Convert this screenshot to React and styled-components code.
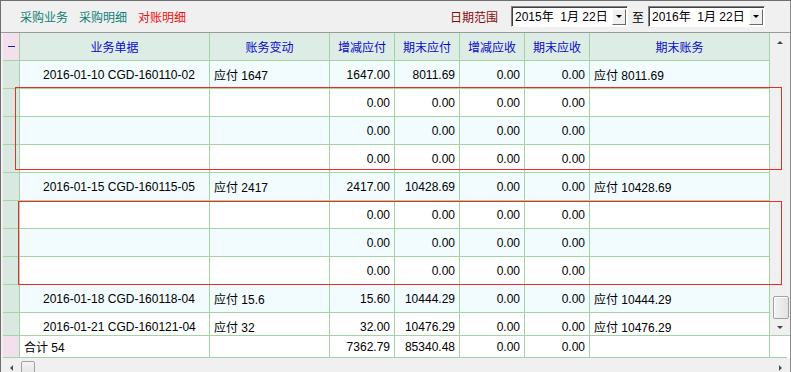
import React from "react";
import styled, { createGlobalStyle } from "styled-components";

const GlobalStyle = createGlobalStyle`
  html, body {
    margin: 0;
    padding: 0;
    background: #f0f0f0;
  }
  body {
    font-family: "Liberation Sans", "Noto Sans CJK SC", sans-serif;
    font-size: 12px;
  }
`;

const COLS = "17px 190px 120px 65px 65px 65px 65px 180px";
const LINE = "#a4d3a4";

const Frame = styled.div`
  position: relative;
  width: 791px;
  height: 372px;
  box-sizing: border-box;
  border-top: 1px solid #6f6f6f;
  border-left: 1px solid #6f6f6f;
  border-right: 1px solid #8a8a8a;
  background: #f0f0f0;
  overflow: hidden;
  display: flex;
  flex-direction: column;
`;

const Toolbar = styled.div`
  height: 31px;
  flex-shrink: 0;
  display: flex;
  align-items: center;
  padding-left: 19px;
  padding-right: 25px;
  border-bottom: 1px solid #9a9a9a;
  font-family: "Noto Sans CJK SC", "Liberation Sans", sans-serif;
`;

const NavLink = styled.span`
  color: ${(p) => (p.$active ? "#ee1111" : "#0f7f74")};
  margin-right: 11px;
  line-height: 14px;
`;

const Spacer = styled.div`
  flex: 1;
`;

const RangeLabel = styled.span`
  color: #8b0a0a;
  margin-right: 13px;
`;

const DateBox = styled.div`
  width: 117px;
  height: 21px;
  box-sizing: border-box;
  display: flex;
  align-items: center;
  background: #fff;
  border-top: 1px solid #828282;
  border-left: 1px solid #828282;
  border-bottom: 1px solid #fff;
  border-right: 1px solid #fff;
  box-shadow: inset 1px 1px 0 #404040;
  padding-left: 3px;
  font-family: "Liberation Sans", "Noto Sans CJK SC", sans-serif;
  color: #000;
  white-space: pre;
`;

const DateText = styled.span`
  flex: 1;
  line-height: 14px;
`;

const DropBtn = styled.div`
  width: 14px;
  height: 16px;
  margin-right: 1px;
  box-sizing: border-box;
  background: #f0f0f0;
  border-top: 1px solid #fff;
  border-left: 1px solid #fff;
  border-right: 1px solid #696969;
  border-bottom: 1px solid #696969;
  display: flex;
  align-items: center;
  justify-content: center;
`;

const Tri = styled.span`
  width: 0;
  height: 0;
  border-left: ${(p) => p.$s || 3}px solid transparent;
  border-right: ${(p) => p.$s || 3}px solid transparent;
  ${(p) =>
    p.$dir === "up"
      ? `border-bottom: ${p.$s || 3}px solid ${p.$c || "#000"};`
      : `border-top: ${p.$s || 3}px solid ${p.$c || "#000"};`}
`;

const SideTri = styled.span`
  width: 0;
  height: 0;
  border-top: 3px solid transparent;
  border-bottom: 3px solid transparent;
  ${(p) =>
    p.$dir === "left"
      ? "border-right: 3px solid #505050;"
      : "border-left: 3px solid #505050;"}
`;

const To = styled.span`
  margin: 0 4px;
  font-family: "Noto Sans CJK SC", sans-serif;
  color: #000;
`;

const Main = styled.div`
  display: flex;
  padding-left: 2px;
  height: 302px;
  flex-shrink: 0;
`;

const Viewport = styled.div`
  width: 767px;
  height: 302px;
  overflow: hidden;
  background: #fff;
`;

const Row = styled.div`
  display: grid;
  grid-template-columns: ${COLS};
  height: 28px;
  background: ${(p) => (p.$alt ? "#f2fbfd" : "#ffffff")};
`;

const HeadRow = styled(Row)`
  background: #ddede5;
`;

const Cell = styled.div`
  box-sizing: border-box;
  border-right: 1px solid ${LINE};
  border-bottom: 1px solid ${LINE};
  display: flex;
  align-items: center;
  justify-content: ${(p) =>
    p.$align === "right" ? "flex-end" : p.$align === "center" ? "center" : "flex-start"};
  padding: 0 ${(p) => (p.$align === "right" ? "4px" : "0")} 0
    ${(p) => (p.$pl != null ? p.$pl : 4)}px;
  white-space: nowrap;
  overflow: hidden;
  color: #000;
  font-family: "Liberation Sans", "Noto Sans CJK SC", sans-serif;
`;

const HeadCell = styled(Cell)`
  color: #0a0ad0;
  font-family: "Noto Sans CJK SC", "Liberation Sans", sans-serif;
  padding: 0;
  justify-content: center;
`;

const Marker = styled.div`
  box-sizing: border-box;
  border-right: 1px solid ${LINE};
  border-bottom: 1px solid ${LINE};
  background: ${(p) => (p.$pink ? "#f4e0ec" : "#d9e9e1")};
  display: flex;
  align-items: center;
  justify-content: center;
`;

const MinusBar = styled.span`
  width: 7px;
  height: 1px;
  background: #1a1ad8;
`;

const VScroll = styled.div`
  width: 19px;
  display: flex;
  flex-direction: column;
  align-items: center;
  background: #f0f0f0;
`;

const ArrowSlot = styled.div`
  height: ${(p) => p.$h}px;
  width: 100%;
  display: flex;
  align-items: center;
  justify-content: center;
`;

const Track = styled.div`
  flex: 1;
  width: 100%;
  display: flex;
  flex-direction: column;
  justify-content: flex-end;
  align-items: center;
`;

const Thumb = styled.div`
  width: 16px;
  height: 23px;
  box-sizing: border-box;
  margin-left: 2px;
  border: 1px solid #a2a2a2;
  border-radius: 2px;
  background: linear-gradient(90deg, #f4f4f4, #e2e2e2);
  box-shadow: inset 1px 1px 0 #fff;
`;

const FooterRow = styled.div`
  display: grid;
  grid-template-columns: ${COLS} 17px;
  height: 23px;
  margin-left: 2px;
  flex-shrink: 0;
  background: #fff;
  border-top: 1px solid ${LINE};
  box-sizing: border-box;
`;

const FooterFill = styled.div`
  border-bottom: 1px solid ${LINE};
  background: #fff;
`;

const HScroll = styled.div`
  flex: 1;
  display: flex;
  align-items: center;
  background: #f0f0f0;
`;

const HThumb = styled.div`
  width: 14px;
  height: 15px;
  box-sizing: border-box;
  margin-top: 3px;
  border: 1px solid #a2a2a2;
  border-radius: 2px;
  background: linear-gradient(180deg, #f4f4f4, #e2e2e2);
`;

const HArrow = styled.div`
  width: ${(p) => p.$w}px;
  display: flex;
  justify-content: center;
  margin-top: 2px;
`;

const Mark = styled.div`
  position: absolute;
  left: ${(p) => p.$x}px;
  top: ${(p) => p.$y}px;
  width: ${(p) => p.$w}px;
  height: ${(p) => p.$h}px;
  box-sizing: border-box;
  border: 1px solid rgb(240, 40, 40);
  pointer-events: none;
`;

const headers = ["业务单据", "账务变动", "增减应付", "期末应付", "增减应收", "期末应收", "期末账务"];

const main = (doc, change, add, end, endAcc) => ({
  doc,
  change,
  nums: [add, end, "0.00", "0.00"],
  acc: endAcc,
});
const sub = () => ({ doc: "", change: "", nums: ["0.00", "0.00", "0.00", "0.00"], acc: "" });

const rows = [
  main("2016-01-10 CGD-160110-02", "应付 1647", "1647.00", "8011.69", "应付 8011.69"),
  sub(),
  sub(),
  sub(),
  main("2016-01-15 CGD-160115-05", "应付 2417", "2417.00", "10428.69", "应付 10428.69"),
  sub(),
  sub(),
  sub(),
  main("2016-01-18 CGD-160118-04", "应付 15.6", "15.60", "10444.29", "应付 10444.29"),
  main("2016-01-21 CGD-160121-04", "应付 32", "32.00", "10476.29", "应付 10476.29"),
];

function DataRow({ r, alt }) {
  return (
    <Row $alt={alt}>
      <Marker />
      <Cell $pl={23}>{r.doc}</Cell>
      <Cell>{r.change}</Cell>
      {r.nums.map((n, i) => (
        <Cell key={i} $align="right">
          {n}
        </Cell>
      ))}
      <Cell>{r.acc}</Cell>
    </Row>
  );
}

export default function App() {
  return (
    <>
      <GlobalStyle />
      <Frame>
        <Toolbar>
          <NavLink>采购业务</NavLink>
          <NavLink>采购明细</NavLink>
          <NavLink $active>对账明细</NavLink>
          <Spacer />
          <RangeLabel>日期范围</RangeLabel>
          <DateBox>
            <DateText>2015年  1月 22日</DateText>
            <DropBtn>
              <Tri $s={3} />
            </DropBtn>
          </DateBox>
          <To>至</To>
          <DateBox>
            <DateText>2016年  1月 22日</DateText>
            <DropBtn>
              <Tri $s={3} />
            </DropBtn>
          </DateBox>
        </Toolbar>

        <Main>
          <Viewport>
            <HeadRow>
              <Marker $pink>
                <MinusBar />
              </Marker>
              {headers.map((h) => (
                <HeadCell key={h}>{h}</HeadCell>
              ))}
            </HeadRow>
            {rows.map((r, i) => (
              <DataRow key={i} r={r} alt={i % 2 === 0} />
            ))}
          </Viewport>
          <VScroll>
            <ArrowSlot $h={18}>
              <Tri $dir="up" $s={3} $c="#444" />
            </ArrowSlot>
            <Track>
              <Thumb />
            </Track>
            <ArrowSlot $h={16}>
              <Tri $s={3} $c="#444" />
            </ArrowSlot>
          </VScroll>
        </Main>

        <FooterRow>
          <Marker $pink />
          <Cell>合计 54</Cell>
          <Cell />
          <Cell $align="right">7362.79</Cell>
          <Cell $align="right">85340.48</Cell>
          <Cell $align="right">0.00</Cell>
          <Cell $align="right">0.00</Cell>
          <Cell />
          <FooterFill />
        </FooterRow>

        <HScroll>
          <HArrow $w={20}>
            <SideTri $dir="left" />
          </HArrow>
          <HThumb />
          <Spacer />
          <HArrow $w={19}>
            <SideTri $dir="right" />
          </HArrow>
        </HScroll>

        <Mark $x={14} $y={86} $w={767} $h={83} />
        <Mark $x={17} $y={200} $w={764} $h={84} />
      </Frame>
    </>
  );
}
